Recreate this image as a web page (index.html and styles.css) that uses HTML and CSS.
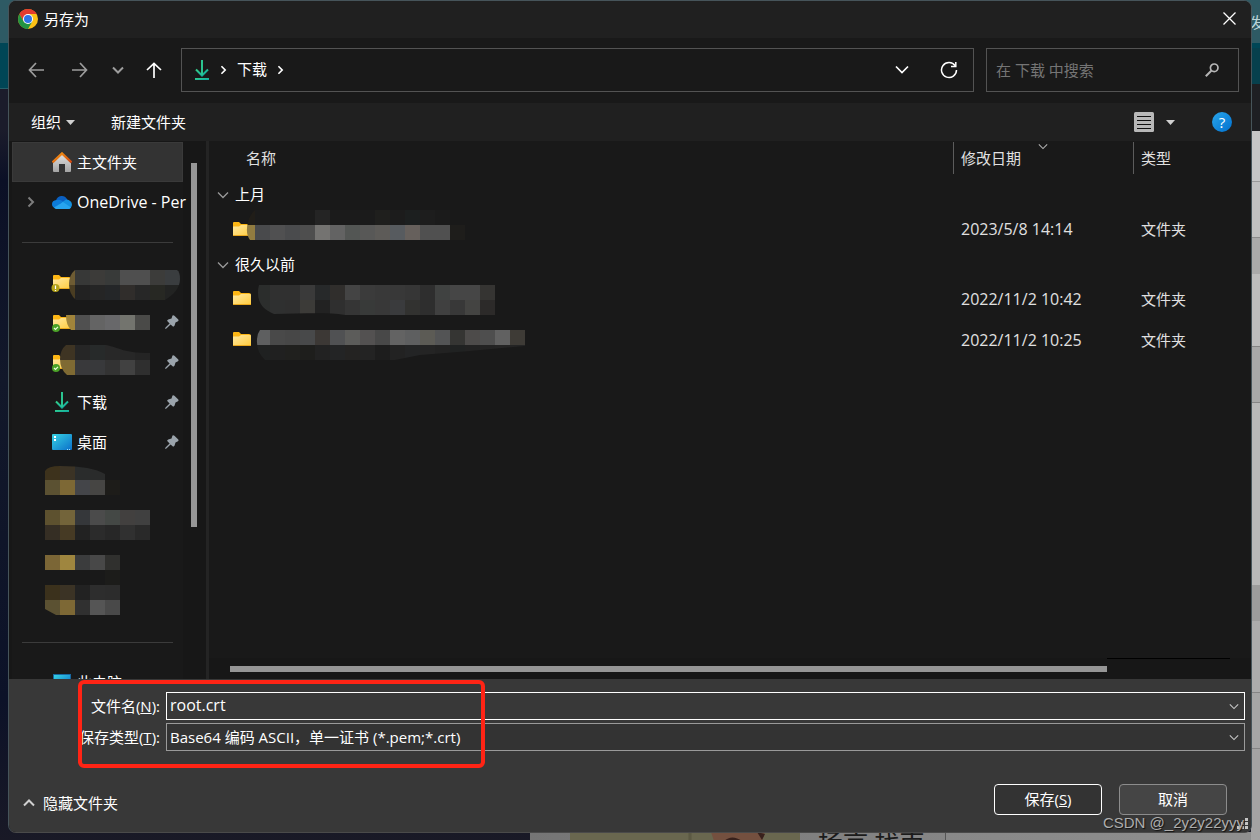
FILE: index.html
```html
<!DOCTYPE html>
<html lang="zh-CN">
<head>
<meta charset="utf-8">
<title>另存为</title>
<link rel="stylesheet" href="styles.css">
<script src="script.js" defer></script>
</head>
<body>
<svg width="0" height="0" class="defs" aria-hidden="true">
  <defs>
    <linearGradient id="gFolder" x1="0" y1="0" x2="1" y2="1"><stop offset="0" stop-color="#ffe9a2"/><stop offset="1" stop-color="#ffcb3d"/></linearGradient>
    <linearGradient id="gDown" x1="0" y1="0" x2="1" y2="1"><stop offset="0" stop-color="#35d08a"/><stop offset="1" stop-color="#0aa5a5"/></linearGradient>
    <linearGradient id="gDesk" x1="0" y1="0" x2="1" y2="1"><stop offset="0" stop-color="#37d3e4"/><stop offset="1" stop-color="#0b6fc9"/></linearGradient>
    <linearGradient id="gHouse" x1="0" y1="0" x2="0" y2="1"><stop offset="0" stop-color="#e2e2e2"/><stop offset="1" stop-color="#a4a4a4"/></linearGradient>
    <linearGradient id="gRoof" x1="0" y1="0" x2="1" y2="1"><stop offset="0" stop-color="#f59a14"/><stop offset="1" stop-color="#cf4410"/></linearGradient>
    <symbol id="folder" viewBox="0 0 18 14"><path d="M0 1Q0 0 1 0H6L8 2H16Q18 2 18 4V8H0Z" fill="#fdb614"/><path d="M0 4.500H6L8 3H17Q18 3 18 4V13Q18 14 17 14H1Q0 14 0 13Z" fill="url(#gFolder)"/><path d="M0 13.500H18" stroke="#e9a71c"/></symbol>
    <symbol id="ok" viewBox="0 0 8 8"><circle cx="4" cy="4" r="4" fill="#4aa127"/><path d="M2 4L3.500 5.500L6 2.800" fill="none" stroke="#e7ffd8" stroke-width="1.200"/></symbol>
    <symbol id="down" viewBox="0 0 16 20"><path d="M2 9.500L8 15.500L14 9.500" fill="none" stroke="url(#gDown)" stroke-width="2"/><rect x="1" y="18" width="14" height="2" fill="url(#gDown)"/><rect x="7" y="0" width="2" height="15" fill="#2bc490"/></symbol>
    <symbol id="chev" viewBox="0 0 12 8"><path d="M1 1.500L6 6.500L11 1.500" fill="none" stroke="currentColor" stroke-width="1.300"/></symbol>
    <symbol id="right" viewBox="0 0 8 12"><path d="M1.500 1.500L6 6L1.500 10.500" fill="none" stroke="currentColor" stroke-width="2"/></symbol>
    <symbol id="tri" viewBox="0 0 9 5"><path d="M0 0H9L4.500 5Z" fill="currentColor"/></symbol>
    <symbol id="arrow" viewBox="0 0 16 16"><path d="M16 8H1.500M8 1L1.500 8L8 15" fill="none" stroke="currentColor" stroke-width="1.700"/></symbol>
    <symbol id="pin" viewBox="0 0 14 14"><path d="M7.500 0.500Q8.500 0 9.400 0.700L13.300 4.600Q14 5.600 13 6.200L10.500 7.500L9.500 10.800L8.200 11.800L5.600 9.400L1.400 13.500L0 14L0.500 12.600L4.600 8.400L2 5.800L3.200 4.400L6.500 3.500Z" fill="#9aa3ab"/></symbol>
  </defs>
</svg>
<div class="desktop">
  <span class="behind behind-menu">发</span>
  <span class="behind behind-head">扬言 找南</span>
  <svg class="behind behind-photo" width="230" height="9" viewBox="570 831 230 9" aria-hidden="true"><rect x="570" y="831" width="230" height="9" fill="#69674f"/><path d="M690 831v9" stroke="#5b5943" stroke-width="3"/><path d="M711 831H765L762 840H714Z" fill="#74503f"/><path d="M724 840Q732 833 742 840ZM757 831L765 833L762 839Z" fill="#38211c"/></svg>

  <main class="dialog">
    <header class="titlebar">
      <svg width="20" height="20" viewBox="0 0 20 20" aria-hidden="true"><circle cx="10" cy="10" r="10" fill="#fbc116"/><path d="M1.340 5A10 10 0 0 1 18.660 5H10L5.670 12.500Z" fill="#e33b2e"/><path d="M1.340 5A10 10 0 0 0 10 20L14.330 12.500H5.670Z" fill="#229342"/><circle cx="10" cy="10" r="5" fill="#fff"/><circle cx="10" cy="10" r="4" fill="#2f74e6"/></svg>
      <h1>另存为</h1>
      <button class="close" aria-label="关闭"><svg width="13" height="13" viewBox="0 0 13 13"><path d="M0.500 0.500L12.500 12.500M12.500 0.500L0.500 12.500" stroke="#fff" stroke-width="1.300"/></svg></button>
    </header>

    <nav class="navbar">
      <div class="history">
        <button class="dim" aria-label="后退"><svg width="16" height="16"><use href="#arrow"/></svg></button>
        <button class="dim flip" aria-label="前进"><svg width="16" height="16"><use href="#arrow"/></svg></button>
        <button class="dim" aria-label="最近位置"><svg width="12" height="8" viewBox="0 0 12 8"><path d="M1 1.500L6 6.500L11 1.500" fill="none" stroke="currentColor" stroke-width="2"/></svg></button>
        <button class="up" aria-label="上移"><svg width="16" height="16"><use href="#arrow"/></svg></button>
      </div>
      <div class="address">
        <svg width="16" height="20"><use href="#down"/></svg>
        <svg class="crumb" width="7" height="10"><use href="#right"/></svg>
        <a href="#downloads">下载</a>
        <svg class="crumb" width="7" height="10"><use href="#right"/></svg>
        <button class="drop" aria-label="展开"><svg width="14" height="9" viewBox="0 0 14 9"><path d="M1 1.500L7 7.500L13 1.500" fill="none" stroke="#fff" stroke-width="1.700"/></svg></button>
        <button class="reload" aria-label="刷新"><svg width="18" height="18" viewBox="0 0 18 18"><path d="M15.200 4.800A7.500 7.500 0 1 0 16.500 9" fill="none" stroke="#fff" stroke-width="1.500"/><path d="M15.800 1V5.500H11" fill="none" stroke="#fff" stroke-width="1.500"/></svg></button>
      </div>
      <div class="search">
        <input type="search" placeholder="在 下载 中搜索" aria-label="在 下载 中搜索">
        <svg width="14" height="14" viewBox="0 0 14 14" aria-hidden="true"><circle cx="9.200" cy="4.800" r="3.800" fill="none" stroke="#b5b5b5" stroke-width="1.700"/><path d="M6.500 7.500L0.800 13.200" stroke="#b5b5b5" stroke-width="2"/></svg>
      </div>
    </nav>

    <div class="toolbar">
      <button>组织<svg width="9" height="5"><use href="#tri"/></svg></button>
      <button class="new">新建文件夹</button>
      <button class="view" aria-label="更改视图"><svg width="20" height="20" viewBox="0 0 20 20"><rect width="20" height="20" rx="1.500" fill="#b8b8b8"/><path d="M3 4.500H17M3 8.500H17M3 12.500H17M3 16.500H17" stroke="#111"/></svg><svg width="9" height="5"><use href="#tri"/></svg></button>
      <button class="help" aria-label="帮助">?</button>
    </div>

    <div class="content">
      <aside class="sidebar">
        <ul class="tree">
          <li class="selected"><svg class="icon" width="20" height="20" viewBox="0 0 20 20"><path d="M1 10L10 1.500L19 10V19Q19 20 18 20H13V12H7V20H2Q1 20 1 19Z" fill="url(#gHouse)"/><path d="M0.500 10.500L10 1.500L19.500 10.500" fill="none" stroke="url(#gRoof)" stroke-width="2.400"/></svg><a href="#home">主文件夹</a></li>
          <li><svg class="expand" width="8" height="12"><use href="#right"/></svg><svg class="icon" width="20" height="14" viewBox="0 0 20 14"><path d="M4 5.500A6 6 0 0 1 15 4L17 7L9 11L2 8Z" fill="#0a5fc0"/><path d="M4.500 5Q8 4 11 6.500L3 13Q0 12 0 9Q0 5.500 4.500 5Z" fill="#0c7bd8"/><path d="M14 4.500Q20 5 20 10Q19 14 16 14H11L9 8Z" fill="#1490df"/><path d="M2 12.500L11 7L19 12.500Q18 14 16 14H4.500Q3 14 2 12.500Z" fill="#27a5ee"/></svg><a class="latin" href="#onedrive">OneDrive - Per</a></li>
          <li class="rule"></li>
          <li><svg class="mosaic" width="135" height="40" viewBox="45 262 135 40"><clipPath id="c1"><path d="M75 270H177Q180 272 180 279Q180 291 165 300H76Q69 294 69 284Q69 275 75 270Z"/></clipPath><use href="#folder" x="53" y="275" width="18" height="14"/><circle cx="55.500" cy="288" r="4" fill="#b4a31b"/><path d="M55.500 285.500V289M55.500 290V291" stroke="#fff" stroke-width="1.200"/><g clip-path="url(#c1)"><g data-at="60,270" data-cells="6e5c33 373837 3c3b39 383a39 4f4f4f 4f4f4f 3c3c3a 3a3d3f"></g><g data-at="60,285" data-cells="4a3d22 222222 252525 242628 302d2b 272727 272823 222322"></g></g></svg></li>
          <li><svg class="mosaic" width="135" height="40" viewBox="45 302 135 40"><clipPath id="c2"><path d="M66 315H150V330H71Q66 325 66 315Z"/></clipPath><use href="#folder" x="53" y="315" width="18" height="14"/><use href="#ok" x="52" y="324" width="8" height="8"/><g clip-path="url(#c2)" data-at="60,315" data-cells="a0843b 505050 646464 68686a 73746e 4a4a48"></g></svg><svg class="pin" width="14" height="14"><use href="#pin"/></svg></li>
          <li><svg class="mosaic" width="135" height="40" viewBox="45 342 135 40"><clipPath id="c3"><path d="M66 345H106C120 348 124 353 150 353V375H67Q60 369 60 359Q60 350 66 345Z"/></clipPath><use href="#folder" x="53" y="355" width="18" height="14"/><use href="#ok" x="52" y="364" width="8" height="8"/><g clip-path="url(#c3)"><g data-at="60,345" data-cells="3e3423 262626 272a2a 282828 272727 242424"></g><g data-at="60,360" data-cells="7f6a33 39393b 38393b 333333 414141 2f2f2f"></g></g></svg><svg class="pin" width="14" height="14"><use href="#pin"/></svg></li>
          <li><svg class="icon" width="20" height="20"><use href="#down"/></svg><a href="#downloads">下载</a><svg class="pin" width="14" height="14"><use href="#pin"/></svg></li>
          <li><svg class="icon" width="20" height="16" viewBox="0 0 20 16"><rect width="20" height="16" rx="1" fill="url(#gDesk)"/><path d="M2 2H4V4H2ZM2 5H4V7H2Z" fill="#fff"/><path d="M15 15.500H18" stroke="#9de0ff" stroke-dasharray="1 1"/></svg><a href="#desktop">桌面</a><svg class="pin" width="14" height="14"><use href="#pin"/></svg></li>
          <li><svg class="mosaic" width="135" height="40" viewBox="45 462 135 40"><clipPath id="c4"><path d="M45 471Q48 466 60 466Q92 466 105 474V480H120V495H45Z"/></clipPath><g clip-path="url(#c4)"><g data-at="45,465" data-cells="3d321c 3b3325 2a2c2c 2a2b2b"></g><g data-at="45,480" data-cells="5b5132 7d6835 444549 464543 1d1c19"></g></g></svg></li>
          <li><svg class="mosaic" width="135" height="40" viewBox="45 502 135 40"><g data-at="45,510" data-cells="5d512f 73643a 35373a 4b4b4b 444845 42403f 404040"></g><g data-at="45,525" data-cells="352e24 463a24 222222 2b2b2b 272727 303030 292929"></g></svg></li>
          <li><svg class="mosaic" width="135" height="40" viewBox="45 542 135 40"><g data-at="45,555" data-cells="7b6636 9f863f 3b3c3d 484848 30302e"></g><g data-at="105,570" data-cells="1c1c1a"></g></svg></li>
          <li><svg class="mosaic" width="135" height="40" viewBox="45 582 135 40"><clipPath id="c5"><path d="M45 585H120V615H56L45 609Z"/></clipPath><g clip-path="url(#c5)"><g data-at="45,585" data-cells="3b311c 3b3325 222222 2d2d2d 2c2c2c"></g><g data-at="45,600" data-cells="5b5132 7d6835 303030 555555 494949"></g></g></svg></li>
          <li class="rule"></li>
          <li><svg class="icon" width="20" height="16" viewBox="0 0 20 16"><rect x="1" width="18" height="13" fill="#1767a0"/><rect x="2" y="1" width="16" height="11" fill="url(#gDesk)"/></svg><a href="#pc">此电脑</a></li>
        </ul>
        <div class="vscroll"></div>
      </aside>

      <section class="files">
        <table>
          <colgroup><col><col class="c-date"><col class="c-type"></colgroup>
          <thead>
            <tr><th><span>名称</span></th><th><span>修改日期<svg class="sort" width="10" height="7"><use href="#chev"/></svg></span></th><th><span>类型</span></th></tr>
          </thead>
          <tbody>
            <tr class="group"><td colspan="3"><svg width="12" height="8"><use href="#chev"/></svg>上月</td></tr>
            <tr><td><svg class="name" width="300" height="40" viewBox="233 209 300 40"><clipPath id="c6"><path d="M255 210H465V240H250Q245 233 248 222Q250 214 255 210Z"/></clipPath><use href="#folder" x="233" y="222" width="18" height="14"/><g clip-path="url(#c6)"><g data-at="240,210" data-cells="201d18 1b1b1b 1a1a1a 1a1a1a 1b1b1b 242424 1b1b1b 1b1b1b 1b1b1b 1f1f1d 1c1c1c 1c1f1f 1d1d1d 1b1b1b"></g><g data-at="240,225" data-cells="927c40 494a4c 505051 4a4b4d 4e4e4e 747371 636363 535654 585857 5d5b58 575b5f 66605c 505050 505050 1e1d1b"></g></g></svg></td><td class="latin">2023/5/8 14:14</td><td>文件夹</td></tr>
            <tr class="group"><td colspan="3"><svg width="12" height="8"><use href="#chev"/></svg>很久以前</td></tr>
            <tr><td><svg class="name" width="300" height="40" viewBox="233 279 300 40"><clipPath id="c7"><path d="M259 285H495V315H345C325 312 300 314 274 314Q258 308 258 293Q258 288 259 285Z"/></clipPath><use href="#folder" x="233" y="291" width="18" height="14"/><g clip-path="url(#c7)"><g data-at="255,285" data-cells="2b2d2c 303030 303030 3a3a3a 27292a 302e2c 444444 3b3b3b 393939 383838 363636 2e2e2e 404241 464646 464646 353432"></g><g data-at="255,300" data-cells="2c2e2d 2f3030 2f2f2f 3c3b38 222222 2f2f2f 353535 383a39 383838 3a3b3d 323230 2e2e2e 404040 383838 444442 2c2a29"></g></g></svg></td><td class="latin">2022/11/2 10:42</td><td>文件夹</td></tr>
            <tr><td><svg class="name" width="300" height="40" viewBox="233 320 300 40"><clipPath id="c8"><path d="M260 330H525V346L470 351L420 355L395 360H265Q256 352 257 339Q257 334 260 330Z"/></clipPath><use href="#folder" x="233" y="332" width="18" height="14"/><g clip-path="url(#c8)"><g data-at="255,330" data-cells="5e5f60 494949 474747 48494a 3c3835 505153 5c5c5a 535151 484848 636363 5e5f60 5c5b55 535455 353533 4d4b4a 4e4e4e 616161 3e3b36"></g><g data-at="255,345" data-cells="1f2121 202020 20201e 1e1e1c 222222 232425 242322 232323 1d1d1d 222222 232425 242424 222222 202222 222222 232323 242424 242424"></g></g></svg></td><td class="latin">2022/11/2 10:25</td><td>文件夹</td></tr>
          </tbody>
        </table>
        <div class="hscroll"><div class="thumb"></div><div class="rest"></div></div>
      </section>
    </div>

    <form class="footer" onsubmit="return false">
      <div class="fields">
        <label for="fname">文件名(<u>N</u>):</label>
        <div class="combo active"><input id="fname" class="latin" type="text" value="root.crt"><svg width="10" height="7"><use href="#chev"/></svg></div>
        <label for="ftype">保存类型(<u>T</u>):</label>
        <div class="combo"><select id="ftype"><option>Base64 编码 ASCII，单一证书 (*.pem;*.crt)</option></select><svg width="10" height="7"><use href="#chev"/></svg></div>
      </div>
      <div class="actions">
        <button type="button" class="hide"><svg width="12" height="8" viewBox="0 0 12 8"><path d="M1 6.500L6 1.500L11 6.500" fill="none" stroke="#d0d0d0" stroke-width="2"/></svg>隐藏文件夹</button>
        <button type="submit" class="btn save">保存(<u>S</u>)</button>
        <button type="button" class="btn">取消</button>
      </div>
      <div class="highlight"></div>
      <svg class="grip" width="12" height="12" viewBox="0 0 12 12" aria-hidden="true"><path d="M8 0H11V3H8ZM4 4H7V7H4ZM8 4H11V7H8ZM0 8H3V11H0ZM4 8H7V11H4ZM8 8H11V11H8Z" fill="#c4c4c4"/></svg>
    </form>
  </main>
  <span class="watermark">CSDN @_2y2y22yyy</span>
</div>
</body>
</html>
```

FILE: styles.css
```css
* { box-sizing: border-box; }

body {
  margin: 0;
  font: 15px/20px "Open Sans", "Noto Sans CJK SC", sans-serif;
  color: #fff;
  background: #14141f;
}

.defs { position: absolute; }

button, input, select {
  font: inherit;
  color: inherit;
  background: none;
  border: 0;
  padding: 0;
  margin: 0;
  outline: 0;
}

a { color: inherit; text-decoration: none; }

.latin { font-size: 16px; }

/* Page and wallpaper visible around the dialog */
.desktop {
  position: relative;
  display: flex;
  min-height: 100vh;
  padding: 0 8px 8px;
  overflow: hidden;
  background:
    linear-gradient(#2e5a64 43px, #004656 43px 48px, #07404d 48px 84px, #1e1f23 84px 131px, #c6c6c6 131px 181px, #999 181px 182px, #c0c0c0 182px 237px, #8c8c8c 237px 238px, #aaa 238px 274px, #bdbdbd 274px 346px, #858585 346px 347px, #a8a8a8 347px 402px, #858585 402px 403px, #b8b8b8 403px 585px, #9c9c9c 585px 621px, #acacac 621px 692px, #858585 692px 693px, #a6a6a6 693px 748px, #858585 748px 749px, #a3a3a3 749px) right top / 9px 100% no-repeat,
    linear-gradient(90deg, #757575, #858585 415px, #555 415px 416px, #888 416px, #999) 530px 100% / 100% 9px no-repeat,
    linear-gradient(#2e5a64, #2e5a64) left top / 100% 9px no-repeat,
    linear-gradient(#2e5a64 43px, #004656 43px 88px, #25606a 88px 89px, #1b1c2b 89px 130px, #0b1026 180px, #12182a 380px, #0c1228 700px, #191926) left top;
}

.behind { position: absolute; color: #b9d3d8; }
.behind-menu { right: -5px; top: 12px; }
.behind-head { left: 818px; bottom: -17px; font-size: 25px; line-height: 32px; color: #1b1b1b; }
.behind-photo { left: 570px; bottom: 0; }

.dialog {
  position: relative;
  flex: 1;
  min-width: 0;
  display: flex;
  flex-direction: column;
  background: #191919;
  border: 1px solid #46545a;
  border-bottom-color: #4a4a4a;
  border-radius: 8px;
  overflow: hidden;
}

.titlebar {
  display: flex;
  align-items: center;
  gap: 6px;
  height: 37px;
  padding: 0 15px 2px 9px;
  background: #202020;
}
.titlebar h1 { margin: 0; font: inherit; flex: 1; }
.close { display: flex; }

.navbar {
  display: flex;
  align-items: center;
  height: 65px;
  padding: 0 12px 2px 5px;
}
.history {
  display: grid;
  grid-template-columns: 44px 44px 32px 40px;
  padding-right: 7px;
}
.history button { display: flex; align-items: center; justify-content: center; height: 40px; }
.dim { color: #9d9d9d; }
.flip svg { transform: rotate(180deg); }
.up svg { transform: rotate(90deg); }

.address, .search {
  display: flex;
  align-items: center;
  height: 44px;
  border: 1px solid #535353;
}
.address { flex: 1; padding: 0 15px 0 12px; gap: 10px; margin-right: 12px; }
.address a { padding-bottom: 2px; }
.address button { display: flex; }
.drop { margin-left: auto; }
.reload { margin-left: 21px; }
.search { width: 253px; padding: 0 19px 0 9px; }
.search input { flex: 1; min-width: 0; appearance: none; }
.search input::placeholder { color: #757575; opacity: 1; }

.toolbar {
  display: flex;
  align-items: center;
  height: 38px;
  padding: 0 19px 0 22px;
  background: #202020;
}
.toolbar button { display: flex; align-items: center; gap: 5px; }
.toolbar svg { color: #d0d0d0; }
.toolbar .new { margin-left: 36px; }
.toolbar .view { margin-left: auto; gap: 12px; }
.toolbar .help {
  justify-content: center;
  width: 20px;
  height: 20px;
  margin-left: 37px;
  border-radius: 50%;
  background: linear-gradient(135deg, #2aa6ea, #0070cf);
}

.content { flex: 1 0 538px; height: 538px; display: flex; min-height: 0; }

.sidebar {
  display: flex;
  width: 200px;
  flex: none;
  padding: 1px 0 0 3px;
  overflow: hidden;
  border-right: 3px solid #242424;
  background: #171717;
}
.tree {
  flex: 1;
  min-width: 0;
  margin: 0;
  padding: 0;
  list-style: none;
  background: #191919;
}
.tree li {
  position: relative;
  display: flex;
  align-items: center;
  gap: 5px;
  height: 40px;
  padding: 0 4px 0 40px;
}
.tree li.selected { background: #333; border: 1px solid #3a3a3a; padding-left: 39px; }
.tree a { flex: 1; min-width: 0; margin-right: -4px; white-space: nowrap; }
.tree .icon { flex: none; }
.tree .expand { position: absolute; left: 15px; color: #7d7d7d; }
.tree .rule { padding: 0 10px; }
.tree .rule::before { content: ""; flex: 1; height: 1px; background: #3b3b3b; }
.tree .mosaic { flex: none; margin-left: -7px; overflow: visible; }
.tree .pin { position: absolute; right: 4px; }
.vscroll { flex: none; width: 6px; height: 364px; margin: 21px 9px 0 8px; background: #969696; }

.files { flex: 1; min-width: 0; display: flex; flex-direction: column; }
table { width: 100%; table-layout: fixed; border-collapse: collapse; }
.c-date { width: 180px; }
.c-type { width: 118px; }
th { height: 38px; padding: 0; font-weight: 400; text-align: left; vertical-align: top; color: #e0e0e0; }
th span { position: relative; display: block; margin-top: 1px; padding-left: 7px; line-height: 32px; border-left: 1px solid #5c5c5c; }
th:first-child span { padding-left: 36px; border-color: transparent; }
.sort { position: absolute; left: 84px; top: 1px; color: #b0b0b0; }
td { height: 41px; padding: 0 0 0 8px; color: #e0e0e0; }
td:first-child { padding-left: 24px; }
.group td { height: 29px; color: #fff; }
.group td:first-child { padding-left: 8px; }
.group svg { margin-right: 6px; color: #999; vertical-align: middle; }
.name { display: block; overflow: visible; }

.hscroll { display: flex; align-items: stretch; height: 21px; margin-top: auto; padding: 0 21px; background: #171717; }
.thumb { flex: 877; height: 6px; margin-top: 8px; background: #969696; }
.rest { flex: 123; height: 1px; background: #000; }

.footer { position: relative; padding: 13px 6px 17px; background: #383838; }
.fields {
  display: grid;
  grid-template-columns: 145px 1fr;
  gap: 3px 6px;
  align-items: center;
}
.fields label { text-align: right; white-space: nowrap; }
.combo { position: relative; display: flex; height: 28px; border: 1px solid #9a9a9a; background: #333; }
.combo.active { border-color: #fff; background: #383838; }
.combo input, .combo select { flex: 1; min-width: 0; padding: 0 28px 0 3px; appearance: none; }
.combo .latin { padding-bottom: 2px; }
.combo svg { position: absolute; right: 5px; top: 10px; color: #c8c8c8; pointer-events: none; }

.actions { display: flex; align-items: center; gap: 17px; margin-top: 33px; padding-right: 18px; }
.hide { display: flex; align-items: center; gap: 8px; margin: 6px auto 0 8px; }
.btn { width: 108px; height: 31px; padding-bottom: 2px; border: 1px solid #8c8c8c; border-radius: 4px; background: #454545; }
.btn.save { border-color: #fff; background: #333; }

.highlight {
  position: absolute;
  left: 69px;
  top: 1px;
  width: 407px;
  height: 88px;
  border: 4px solid #ff2415;
  border-radius: 6px;
}
.grip { position: absolute; right: 2px; bottom: 2px; }

.watermark {
  position: absolute;
  right: 16px;
  bottom: 8px;
  font: 15px/20px "Liberation Sans", sans-serif;
  color: #adadad;
  text-shadow: 1px 1px 1px #111;
}
```

FILE: script.js
```js
// Fills every mosaic strip with 15px squares, one for each colour listed.
const TILE = 15;
document.querySelectorAll("[data-cells]").forEach((strip) => {
  const [x, y] = strip.dataset.at.split(",").map(Number);
  strip.dataset.cells.split(" ").forEach((colour, i) => {
    const tile = document.createElementNS("http://www.w3.org/2000/svg", "rect");
    tile.setAttribute("x", x + i * TILE);
    tile.setAttribute("y", y);
    tile.setAttribute("width", TILE);
    tile.setAttribute("height", TILE);
    tile.setAttribute("fill", "#" + colour);
    strip.append(tile);
  });
});
```
